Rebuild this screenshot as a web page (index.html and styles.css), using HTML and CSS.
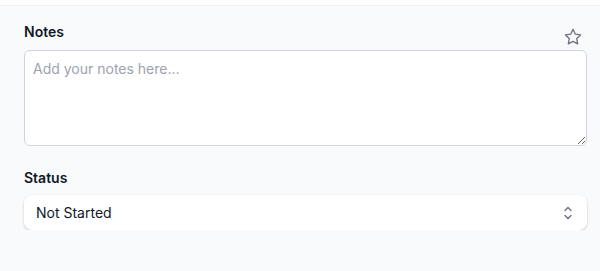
FILE: index.html
```html
<!DOCTYPE html>
<html>
<head>
<meta charset="utf-8">
<link rel="stylesheet" href="styles.css">
</head>
<body>
<div class="topbar"></div>
<main class="form">
  <div class="field-head">
    <label class="label" for="notes">Notes</label>
    <svg class="star" width="20" height="20" viewBox="0 0 24 24" fill="none" stroke="#6b7280" stroke-width="1.6" stroke-linejoin="round"><path d="M12 2.8l2.8 5.8 6.3.9-4.6 4.4 1.1 6.3L12 17.2l-5.6 3 1.1-6.3L2.9 9.5l6.3-.9z"/></svg>
  </div>
  <textarea id="notes" class="notes" placeholder="Add your notes here..."></textarea>
  <div class="field-head status-head">
    <label class="label">Status</label>
  </div>
  <div class="select">
    <span>Not Started</span>
    <svg width="14" height="18" viewBox="0 0 14 18" fill="none" stroke="#6b7280" stroke-width="1.4" stroke-linecap="round" stroke-linejoin="round"><path d="M4 6.5l3-3 3 3"/><path d="M4 11.5l3 3 3-3"/></svg>
  </div>
</main>
</body>
</html>
```
FILE: styles.css
```css
html, body {
  margin: 0;
  padding: 0;
  background: #f9fafb;
  font-family: Inter, "Noto Sans", sans-serif;
}
.topbar {
  height: 5px;
  background: #ffffff;
  border-bottom: 1px solid #f0f1f3;
}
.form {
  padding: 16px 13px 0 24px;
  display: flex;
  flex-direction: column;
}
.field-head {
  display: flex;
  justify-content: space-between;
  align-items: flex-start;
  height: 20px;
  margin-bottom: 8px;
}
.label {
  font-size: 14px;
  line-height: 20px;
  font-weight: 600;
  color: #111827;
}
.star {
  margin-top: 5px;
  margin-right: 4px;
}
.notes {
  box-sizing: border-box;
  width: 100%;
  height: 96px;
  margin: 0;
  padding: 8px 8px;
  border: 1px solid #d1d5db;
  border-radius: 6px;
  background: #ffffff;
  font-family: Inter, "Noto Sans", sans-serif;
  font-size: 14px;
  line-height: 20px;
  color: #111827;
  resize: vertical;
}
.notes::placeholder {
  color: #9ca3af;
}
.status-head {
  margin-top: 22px;
  margin-bottom: 7px;
}
.select {
  box-sizing: border-box;
  height: 35px;
  display: flex;
  align-items: center;
  justify-content: space-between;
  padding: 0 12px 0 12px;
  background: #ffffff;
  border-radius: 8px;
  box-shadow: 0 1px 3px rgba(0,0,0,0.14), 0 1px 2px rgba(0,0,0,0.08);
  font-size: 14px;
  color: #111827;
}
```
